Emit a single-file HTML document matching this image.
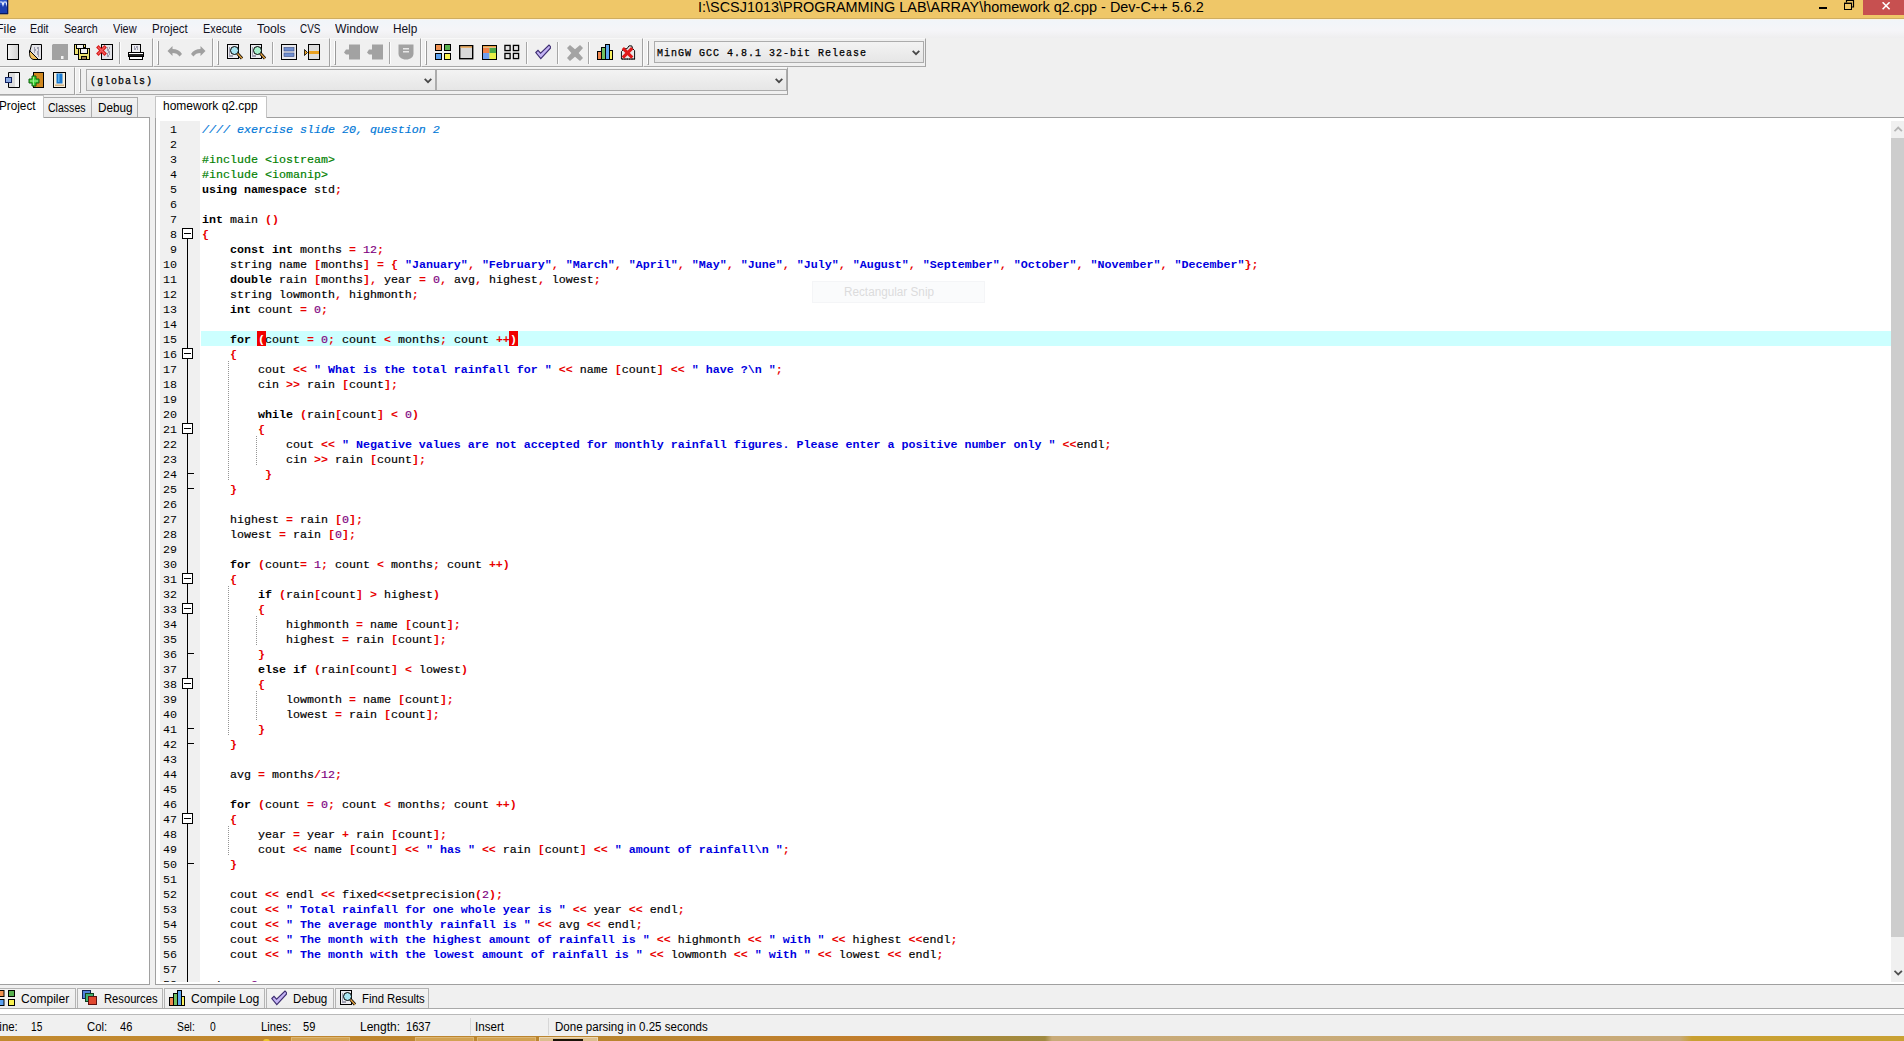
<!DOCTYPE html>
<html lang="en">
<head>
<meta charset="utf-8">
<title>Dev-C++ 5.6.2</title>
<style>
html,body{margin:0;padding:0}
body{width:1904px;height:1041px;position:relative;overflow:hidden;background:#f0f0f0;
 font-family:"Liberation Sans",sans-serif;font-size:12px;color:#000}
div,span,svg,b,i{box-sizing:border-box}
.a{position:absolute}
/* ---- title bar ---- */
#title{position:absolute;left:0;top:0;width:1904px;height:19px;background:#efc768;border-bottom:1px solid #cfad60}
#ttext{position:absolute;transform-origin:0 0;left:698px;top:-3px;height:20px;line-height:20px;font-size:15px;white-space:pre;color:#000}
#close{position:absolute;left:1863px;top:0;width:41px;height:15px;background:#c75050}
/* ---- menu ---- */
#menu{position:absolute;left:0;top:19px;width:1904px;height:19px;border-top:1px solid #fcf5e6;background:linear-gradient(#f1f5f9,#f5f5f8 60%,#eeeeef)}
.t{position:absolute;transform-origin:0 0;white-space:pre;line-height:14px;height:14px;color:#000}
#menu .t{top:2px;color:#10101c}
/* ---- toolbars ---- */
.band{position:absolute;border-right:1px solid #a3a3a3;border-bottom:1px solid #a9a9a9;border-left:1px solid #fbfbfb;border-top:1px solid #f8f8f8;background:#f0f0f0}
.grip{position:absolute;left:3px;top:2px;width:2px;height:24px;border-left:1px solid #fff;border-right:1px solid #9a9a9a;border-bottom:1px solid #9a9a9a}
.sep{position:absolute;width:2px;height:22px;border-left:1px solid #a6a6a6;border-right:1px solid #fdfdfd}
.ic{position:absolute;width:16px;height:16px;overflow:visible}
.combo{position:absolute;height:22px;border:1px solid #acacac;background:linear-gradient(#f3f3f3,#e6e6e6);
 font-family:"Liberation Mono",monospace;font-size:10px;letter-spacing:1px;-webkit-text-stroke:0.25px;line-height:23px;padding-left:3px;white-space:pre;color:#000}
.combo svg{position:absolute;right:3px;top:8px}
/* ---- left panel ---- */
#lpane{position:absolute;left:-1px;top:117px;width:151px;height:868px;background:#fff;border:1px solid #a0a0a0}
.ltab{position:absolute;top:97px;height:20px;border:1px solid #acacac;border-bottom:none;background:linear-gradient(#f2f2f2,#ebebeb)}
/* ---- editor ---- */
#ed{position:absolute;left:155px;top:117px;width:1760px;height:868px;background:#fff;border:1px solid #a0a0a0}
#etab{position:absolute;left:155px;top:96px;width:112px;height:22px;background:#fff;border:1px solid #c4c4c4;border-bottom:none}
#gut{position:absolute;left:160px;top:121px;width:40px;height:863px;background:#f0f0f0}
#hlrow{position:absolute;left:201px;top:331px;width:1690px;height:15px;background:#ccffff}
.l,.g{position:absolute;height:15px;line-height:15px;margin-top:2px;font-family:"Liberation Mono",monospace;font-size:11.6667px;white-space:pre;color:#000}
.l{left:202px;-webkit-text-stroke:0.18px}
.g{left:150px;width:27px;text-align:right}
.l b{font-weight:bold;-webkit-text-stroke:0}
.l i{font-style:normal}
.l .c{font-style:italic;color:#0078d7}
.l .p{color:#008000}
.l .s{color:#0000e0}
.l .n{color:#800080}
.l .y{color:#e80000}
.l .m{color:#fff}
.mb{position:absolute;top:331px;width:9px;height:15px;background:#f00000}
.fv{position:absolute;left:187px;width:1px;background:#000}
.fb{position:absolute;left:182px;width:11px;height:11px;border:1px solid #000;background:#fff}
.fb span{position:absolute;left:1px;top:4px;width:7px;height:1px;background:#000}
.ft{position:absolute;left:188px;width:6px;height:1px;background:#000}
.ig{position:absolute;width:1px;background:repeating-linear-gradient(#959595 0,#959595 1px,transparent 1px,transparent 2px)}
#clip{position:absolute;left:156px;top:118px;width:1748px;height:864px;overflow:hidden}
#clipin{position:absolute;left:-156px;top:-118px;width:1904px;height:1041px}
/* scrollbar */
#sb{position:absolute;left:1891px;top:121px;width:13px;height:861px;background:#f0f0f0}
#sbthumb{position:absolute;left:0;top:17px;width:13px;height:799px;background:#cdcdcd}
/* ---- bottom ---- */
.btab{position:absolute;top:988px;height:21px;border:1px solid #b4b4b4;border-bottom:none;background:linear-gradient(#f3f3f3,#ececec)}
#bwhite{position:absolute;left:0;top:1008px;width:1904px;height:6px;background:#fff;border-top:1px solid #a9a9a9}
#status{position:absolute;left:0;top:1014px;width:1904px;height:22px;background:#f0f0f0;border-top:1px solid #b9b9b9}
#status .t{top:5px}
.ssep{position:absolute;top:3px;width:1px;height:17px;background:#d7d7d7}
#taskbar{position:absolute;left:0;top:1036px;width:1904px;height:5px;
 background:linear-gradient(90deg,#c28a2f 0,#c0862e 300px,#b9842e 640px,#c37d2c 900px,#a98838 960px,#a08a40 1045px,#c9ab78 1052px,#c8aa78 1680px,#c9a032 1692px,#c9a133 1904px)}
.tk{position:absolute;top:1px;width:59px;height:5px;background:#d2a252;border:1px solid #dcb673;border-bottom:none}
</style>
</head>
<body>

<!-- ================= TITLE BAR ================= -->
<div id="title">
 <svg class="a" style="left:0;top:0" width="9" height="15" viewBox="0 0 9 15"><rect x="0" y="0" width="8" height="14" fill="#1c3fb0"/><rect x="0" y="0" width="8" height="5" fill="#2c55c8"/><path d="M0 2h2l1 3 1-3h2l1 3 1-3" stroke="#e8eefc" stroke-width="1.2" fill="none"/><rect x="7" y="0" width="1.3" height="14" fill="#0a1a60"/><rect x="0" y="13" width="8" height="1.3" fill="#0a1a60"/></svg>
 <div id="ttext" style="transform:scaleX(0.962)">I:\SCSJ1013\PROGRAMMING LAB\ARRAY\homework q2.cpp - Dev-C++ 5.6.2</div>
 <svg class="a" style="left:1815px;top:0" width="48" height="15" viewBox="0 0 48 15">
  <rect x="4" y="7" width="8" height="2" fill="#000"/>
  <rect x="29.500" y="3.500" width="7" height="6" fill="none" stroke="#000" stroke-width="1"/>
  <rect x="29" y="2.600" width="8" height="1.400" fill="#000"/>
  <path d="M31.500 2.600V0.500h7v6.500h-1.500" fill="none" stroke="#000" stroke-width="1.200"/>
 </svg>
 <div id="close"><svg class="a" style="left:19px;top:2px" width="9" height="8" viewBox="0 0 9 8"><path d="M0.600 0.300l7 7M7.600 0.300l-7 7" stroke="#fff" stroke-width="1.600" fill="none"/></svg></div>
</div>

<!-- ================= MENU BAR ================= -->
<div id="menu">
 <span class="t" style="left:-4px;transform:scaleX(1.040)">File</span>
 <span class="t" style="left:30px;transform:scaleX(0.895)">Edit</span>
 <span class="t" style="left:64px;transform:scaleX(0.889)">Search</span>
 <span class="t" style="left:113px;transform:scaleX(0.915)">View</span>
 <span class="t" style="left:152px;transform:scaleX(0.958)">Project</span>
 <span class="t" style="left:203px;transform:scaleX(0.902)">Execute</span>
 <span class="t" style="left:257px;transform:scaleX(1.022)">Tools</span>
 <span class="t" style="left:300px;transform:scaleX(0.824)">CVS</span>
 <span class="t" style="left:335px;transform:scaleX(1.014)">Window</span>
 <span class="t" style="left:393px;transform:scaleX(0.984)">Help</span>
</div>

<!-- ================= TOOLBARS ================= -->
<!-- row 1 : main toolbar -->
<div class="band" style="left:-1px;top:38px;width:154px;height:29px">
 <!-- new -->
 <svg class="ic" style="left:7px;top:5px" viewBox="0 0 16 16"><defs><linearGradient id="gp" x1="0" x2="1"><stop offset="0" stop-color="#f4f4f4"/><stop offset="1" stop-color="#d2d2d2"/></linearGradient></defs><rect x="0.500" y="0.500" width="11" height="15" fill="url(#gp)" stroke="#000"/></svg>
 <!-- open -->
 <svg class="ic" style="left:28px;top:5px" viewBox="0 0 16 16"><path d="M3.500 0.500h10v15h-6l-6-7z" fill="#e4e4e8" stroke="#000"/><path d="M6 4h1M9 4h2M6 6h2M10 6h1M6 8h1M9 8h2M9 10h2M10 12h1" stroke="#5a5a78" stroke-width="1"/><path d="M1.500 6.500l9 9h-4.500c-3 0-4.500-3-4.500-6z" fill="#f0c060" stroke="#000"/></svg>
 <!-- save (disabled) -->
 <svg class="ic" style="left:52px;top:5px" viewBox="0 0 16 16"><rect x="0" y="0" width="16" height="16" fill="#a2a2a2"/><rect x="9" y="12" width="2.500" height="3" fill="#f4f4f4"/><rect x="0" y="0" width="1" height="1" fill="#d0d0d0"/></svg>
 <!-- save all -->
 <svg class="ic" style="left:74px;top:5px" viewBox="0 0 16 16"><rect x="0.500" y="0.500" width="11" height="10" fill="#ece070" stroke="#000"/><rect x="2.500" y="0.500" width="7" height="4" fill="#f2f2f2" stroke="#000"/><rect x="4.500" y="4.500" width="11" height="11" fill="#ece070" stroke="#000"/><rect x="6.500" y="4.500" width="7" height="5" fill="#f0f0f4" stroke="#000"/><rect x="7.500" y="12.500" width="5" height="3" fill="#a08050" stroke="#000"/><rect x="9" y="3" width="3" height="2" fill="#000"/></svg>
 <!-- close -->
 <svg class="ic" style="left:97px;top:5px" viewBox="0 0 16 16"><rect x="4.500" y="0.500" width="11" height="15" fill="#e2e2e6" stroke="#000"/><path d="M10 4h1M12 4h1M10 6h2M11 8h2M10 10h1M12 10h1M10 12h2" stroke="#5a5a78"/><path d="M1.500 3.500l6 6M7.500 3.500l-6 6" stroke="#d81818" stroke-width="3.400" stroke-linecap="square"/><path d="M1.500 3.500l6 6M7.500 3.500l-6 6" stroke="#f26060" stroke-width="1.300" stroke-linecap="square"/></svg>
 <div class="sep" style="left:119px;top:3px"></div>
 <!-- print -->
 <svg class="ic" style="left:128px;top:5px" viewBox="0 0 16 16"><rect x="3.500" y="0.500" width="9" height="8" fill="#ececf0" stroke="#000"/><path d="M6 3h1M8 3h2M6 5h2M9 5h1" stroke="#5a5a78"/><rect x="0.500" y="8.500" width="15" height="4" fill="#fff" stroke="#000"/><rect x="1.500" y="12.500" width="13" height="3" fill="#fff" stroke="#000"/><rect x="1" y="10" width="14" height="2" fill="#202020"/></svg>
</div>
<!-- undo / redo -->
<div class="band" style="left:153px;top:38px;width:60px;height:29px"><div class="grip"></div>
 <svg class="ic" style="left:13px;top:5px" viewBox="0 0 16 16"><path d="M0.500 7l5-5v3c4 0 7.500 1.500 9.500 5l-2.500 2.500c-1.500-2.500-4-3.500-7-3.500v3z" fill="#a0a0a0"/></svg>
 <svg class="ic" style="left:36px;top:5px" viewBox="0 0 16 16"><path d="M15.500 7l-5-5v3c-4 0-7.500 1.500-9.500 5l2.500 2.500c1.500-2.500 4-3.500 7-3.500v3z" fill="#a0a0a0"/></svg>
</div>
<!-- search -->
<div class="band" style="left:213px;top:38px;width:117px;height:29px"><div class="grip"></div>
 <svg class="ic" style="left:13px;top:5px" viewBox="0 0 16 16"><rect x="0.500" y="0.500" width="11" height="14" fill="#ececf0" stroke="#000"/><path d="M2 4h1M2 6h1M2 8h1M2 10h1M2 12h4" stroke="#5a5a78"/><circle cx="7.500" cy="6.500" r="4" fill="#a8e4f0" stroke="#000"/><path d="M10.500 9.500l4.500 5" stroke="#000" stroke-width="3"/><path d="M10.500 9.500l4.500 5" stroke="#e0a040" stroke-width="1.400"/></svg>
 <svg class="ic" style="left:36px;top:5px" viewBox="0 0 16 16"><rect x="0.500" y="0.500" width="11" height="14" fill="#ececf0" stroke="#000"/><path d="M2 4h1M2 6h1M2 8h1M2 10h1M2 12h4" stroke="#5a5a78"/><circle cx="7.500" cy="6.500" r="4" fill="#a8f0cc" stroke="#000"/><path d="M10.500 9.500l4.500 5" stroke="#000" stroke-width="3"/><path d="M10.500 9.500l4.500 5" stroke="#e0a040" stroke-width="1.400"/></svg>
 <div class="sep" style="left:58px;top:3px"></div>
 <svg class="ic" style="left:67px;top:5px" viewBox="0 0 16 16"><rect x="0.500" y="0.500" width="15" height="15" fill="#e8e8ec" stroke="#000"/><rect x="3" y="3.500" width="10" height="3.500" fill="#6f8fd0" stroke="#3a4a80" stroke-width=".6"/><rect x="3" y="9" width="10" height="3.500" fill="#6f8fd0" stroke="#3a4a80" stroke-width=".6"/></svg>
 <svg class="ic" style="left:90px;top:5px" viewBox="0 0 16 16"><rect x="4.500" y="0.500" width="11" height="15" fill="#dcdcdc" stroke="#000"/><rect x="5" y="7" width="10" height="3" fill="#e8a020"/><path d="M0.500 5.500l3 3-3 3z" fill="#e8a020" stroke="#000" stroke-width=".8"/></svg>
</div>
<!-- disabled group -->
<div class="band" style="left:330px;top:38px;width:91px;height:29px"><div class="grip"></div>
 <svg class="ic" style="left:13px;top:5px" viewBox="0 0 16 16"><path d="M5 0.500h11v15h-11v-5h-3l-2-2 2-3h3z" fill="#a2a2a2"/></svg>
 <svg class="ic" style="left:36px;top:5px" viewBox="0 0 16 16"><path d="M5 0.500h11v15h-11v-5h-3l-2-2 2-3h3z" fill="#a2a2a2"/></svg>
 <div class="sep" style="left:58px;top:3px"></div>
 <svg class="ic" style="left:67px;top:5px" viewBox="0 0 16 16"><path d="M0.500 0.500h15v9c0 3.500-3 6-7.500 6s-7.500-2.500-7.500-6z" fill="#a2a2a2"/><rect x="5" y="4" width="6" height="1.500" fill="#e8e8e8"/><rect x="5" y="7" width="6" height="1.500" fill="#e8e8e8"/></svg>
</div>
<!-- compile / run -->
<div class="band" style="left:421px;top:38px;width:222px;height:29px"><div class="grip"></div>
 <svg class="ic" style="left:13px;top:5px" viewBox="0 0 16 16"><rect x="0.500" y="0.500" width="6" height="6" fill="#f09050" stroke="#000"/><rect x="9.500" y="0.500" width="6" height="6" fill="#58b050" stroke="#000"/><rect x="0.500" y="9.500" width="6" height="6" fill="#5aa0f0" stroke="#000"/><rect x="9.500" y="9.500" width="6" height="6" fill="#f8f050" stroke="#000"/></svg>
 <svg class="ic" style="left:37px;top:6px" viewBox="0 0 16 16"><rect x="0.700" y="0.700" width="13" height="13" fill="#d8d8d8" stroke="#000" stroke-width="1.400"/><rect x="1.400" y="1.400" width="11.600" height="1.300" fill="#f0a040"/></svg>
 <svg class="ic" style="left:60px;top:6px" viewBox="0 0 16 16"><rect x="0.500" y="0.500" width="14" height="14" fill="#d8d8d8" stroke="#000"/><rect x="1" y="3" width="6.500" height="5" fill="#f08048"/><rect x="7.500" y="3" width="6.500" height="5" fill="#48a848"/><rect x="1" y="8" width="6.500" height="6" fill="#70a0f0"/><rect x="7.500" y="8" width="6.500" height="6" fill="#e8f048"/><rect x="1" y="1" width="13" height="1.500" fill="#f0a040"/></svg>
 <svg class="ic" style="left:82px;top:5px" viewBox="0 0 17 16"><rect x="1" y="1" width="5.500" height="5.500" fill="#e4e4e4" stroke="#000" stroke-width="1.400"/><rect x="10" y="1" width="5.500" height="5.500" fill="#e4e4e4" stroke="#000" stroke-width="1.400"/><rect x="1" y="9.500" width="5.500" height="5.500" fill="#e4e4e4" stroke="#000" stroke-width="1.400"/><rect x="10" y="9.500" width="5.500" height="5.500" fill="#e4e4e4" stroke="#000" stroke-width="1.400"/></svg>
 <div class="sep" style="left:104px;top:3px"></div>
 <svg class="ic" style="left:113px;top:5px" viewBox="0 0 16 16"><path d="M0.800 8.500l2.200-2.200 2.600 2.900 8.400-8.200 1.400 1.400v1.800l-9.600 10.400z" fill="#c4b4f4" stroke="#3c2c70" stroke-width="1.100"/></svg>
 <div class="sep" style="left:135px;top:3px"></div>
 <svg class="ic" style="left:145px;top:6px" viewBox="0 0 14 14"><path d="M2.600 0l4.400 3.800 4.400-3.800 2.600 2.600-3.800 4.400 3.800 4.400-2.600 2.600-4.400-3.800-4.400 3.800-2.600-2.600 3.800-4.400-3.800-4.400z" fill="#a4a4a4"/></svg>
 <div class="sep" style="left:166px;top:3px"></div>
 <svg class="ic" style="left:175px;top:5px" viewBox="0 0 16 16"><rect x="0.500" y="7.500" width="4" height="8" fill="#f08850" stroke="#000"/><rect x="4.500" y="3.500" width="4" height="12" fill="#70c060" stroke="#000"/><rect x="8.500" y="0.500" width="4" height="15" fill="#60a8f0" stroke="#000"/><rect x="12.500" y="6.500" width="3" height="9" fill="#f8f060" stroke="#000"/></svg>
 <svg class="ic" style="left:198px;top:5px" viewBox="0 0 17 16"><path d="M1.500 15.500v-8l3-3h3l2-3h3l1 3 2 2v9z" fill="#e8e8e8" stroke="#000"/><path d="M2 15.500h14" stroke="#000" stroke-dasharray="1.500 1"/><path d="M3 4l10 10M13 4l-10 10" stroke="#e01818" stroke-width="3.400"/></svg>
</div>
<!-- compiler set combo -->
<div class="band" style="left:643px;top:38px;width:283px;height:29px"><div class="grip"></div>
 <div class="combo" style="left:10px;top:2px;width:270px;padding-left:2px">MinGW GCC 4.8.1 32-bit Release<svg width="8" height="6" viewBox="0 0 8 6"><path d="M0.700 0.900l3.300 3.300 3.300-3.300" fill="none" stroke="#484848" stroke-width="1.800"/></svg></div>
</div>
<!-- row 2 -->
<div class="band" style="left:-1px;top:67px;width:76px;height:28px">
 <svg class="ic" style="left:5px;top:4px" viewBox="0 0 16 16"><path d="M3.500 5v-4.500h11v15h-11v-4.500" fill="#dcdcdc" stroke="#000"/><rect x="10" y="1" width="4" height="14" fill="#f4f4f4"/><rect x="0.500" y="5.500" width="6" height="5" fill="#88a8e0" stroke="#102060"/></svg>
 <svg class="ic" style="left:28px;top:4px" viewBox="0 0 16 16"><rect x="5.500" y="0.500" width="10" height="15" fill="#d08820" stroke="#000"/><path d="M4 4h4v3h3v4h-3v3h-4v-3h-3v-4h3z" fill="#38d030" stroke="#106010" stroke-width="1"/><path d="M5.500 5v8M2 9h8" stroke="#a0f090" stroke-width="1"/></svg>
 <svg class="ic" style="left:53px;top:4px" viewBox="0 0 16 16"><rect x="0.500" y="0.500" width="12" height="15" fill="#f6eedc" stroke="#000" stroke-width="1"/><rect x="3.500" y="1.500" width="6" height="10" fill="#1878d0"/><rect x="5" y="2" width="1.500" height="8" fill="#58b0f0"/><rect x="2" y="12.500" width="9" height="1.500" fill="#d0b080"/></svg>
</div>
<div class="band" style="left:75px;top:67px;width:713px;height:28px"><div class="grip" style="top:1px"></div>
 <div class="combo" style="left:10px;top:1px;width:350px">(globals)<svg width="8" height="6" viewBox="0 0 8 6"><path d="M0.700 0.900l3.300 3.300 3.300-3.300" fill="none" stroke="#484848" stroke-width="1.800"/></svg></div>
 <div class="combo" style="left:360px;top:1px;width:351px"><svg width="8" height="6" viewBox="0 0 8 6"><path d="M0.700 0.900l3.300 3.300 3.300-3.300" fill="none" stroke="#484848" stroke-width="1.800"/></svg></div>
</div>


<!-- ================= LEFT PANEL ================= -->
<div id="lpane"></div>
<div class="ltab" style="left:43px;width:49px"></div>
<div class="ltab" style="left:91px;width:47px"></div>
<div class="a" style="left:-1px;top:95px;width:45px;height:23px;background:#fff;border:1px solid #c4c4c4;border-bottom:none"></div>
<span class="t" style="left:-1px;top:99px;transform:scaleX(0.978)">Project</span>
<span class="t" style="left:48px;top:101px;transform:scaleX(0.879)">Classes</span>
<span class="t" style="left:98px;top:101px;transform:scaleX(0.977)">Debug</span>

<!-- ================= EDITOR ================= -->
<div id="ed"></div>
<div id="etab"></div>
<span class="t" style="left:163px;top:99px;transform:scaleX(1.000)">homework q2.cpp</span>
<div id="clip"><div id="clipin">
<div id="gut"></div>
<div id="hlrow"></div>
<div class="mb" style="left:257px"></div><div class="mb" style="left:509px"></div>
<div class="fv" style="top:239px;height:745px"></div>
<div class="fb" style="top:228px"><span></span></div>
<div class="fb" style="top:348px"><span></span></div>
<div class="fb" style="top:423px"><span></span></div>
<div class="fb" style="top:573px"><span></span></div>
<div class="fb" style="top:603px"><span></span></div>
<div class="fb" style="top:678px"><span></span></div>
<div class="fb" style="top:813px"><span></span></div>
<div class="ft" style="top:473px"></div>
<div class="ft" style="top:488px"></div>
<div class="ft" style="top:653px"></div>
<div class="ft" style="top:728px"></div>
<div class="ft" style="top:743px"></div>
<div class="ft" style="top:863px"></div>
<div class="ig" style="left:228px;top:361px;height:120px"></div>
<div class="ig" style="left:228px;top:586px;height:150px"></div>
<div class="ig" style="left:228px;top:826px;height:30px"></div>
<div class="ig" style="left:256px;top:436px;height:30px"></div>
<div class="ig" style="left:256px;top:616px;height:30px"></div>
<div class="ig" style="left:256px;top:691px;height:30px"></div>
<div class="g" style="top:121px">1</div>
<div class="g" style="top:136px">2</div>
<div class="g" style="top:151px">3</div>
<div class="g" style="top:166px">4</div>
<div class="g" style="top:181px">5</div>
<div class="g" style="top:196px">6</div>
<div class="g" style="top:211px">7</div>
<div class="g" style="top:226px">8</div>
<div class="g" style="top:241px">9</div>
<div class="g" style="top:256px">10</div>
<div class="g" style="top:271px">11</div>
<div class="g" style="top:286px">12</div>
<div class="g" style="top:301px">13</div>
<div class="g" style="top:316px">14</div>
<div class="g" style="top:331px">15</div>
<div class="g" style="top:346px">16</div>
<div class="g" style="top:361px">17</div>
<div class="g" style="top:376px">18</div>
<div class="g" style="top:391px">19</div>
<div class="g" style="top:406px">20</div>
<div class="g" style="top:421px">21</div>
<div class="g" style="top:436px">22</div>
<div class="g" style="top:451px">23</div>
<div class="g" style="top:466px">24</div>
<div class="g" style="top:481px">25</div>
<div class="g" style="top:496px">26</div>
<div class="g" style="top:511px">27</div>
<div class="g" style="top:526px">28</div>
<div class="g" style="top:541px">29</div>
<div class="g" style="top:556px">30</div>
<div class="g" style="top:571px">31</div>
<div class="g" style="top:586px">32</div>
<div class="g" style="top:601px">33</div>
<div class="g" style="top:616px">34</div>
<div class="g" style="top:631px">35</div>
<div class="g" style="top:646px">36</div>
<div class="g" style="top:661px">37</div>
<div class="g" style="top:676px">38</div>
<div class="g" style="top:691px">39</div>
<div class="g" style="top:706px">40</div>
<div class="g" style="top:721px">41</div>
<div class="g" style="top:736px">42</div>
<div class="g" style="top:751px">43</div>
<div class="g" style="top:766px">44</div>
<div class="g" style="top:781px">45</div>
<div class="g" style="top:796px">46</div>
<div class="g" style="top:811px">47</div>
<div class="g" style="top:826px">48</div>
<div class="g" style="top:841px">49</div>
<div class="g" style="top:856px">50</div>
<div class="g" style="top:871px">51</div>
<div class="g" style="top:886px">52</div>
<div class="g" style="top:901px">53</div>
<div class="g" style="top:916px">54</div>
<div class="g" style="top:931px">55</div>
<div class="g" style="top:946px">56</div>
<div class="g" style="top:961px">57</div>
<div class="g" style="top:976px">58</div>
<div class="l" style="top:121px"><i class="c">//// exercise slide 20, question 2</i></div>
<div class="l" style="top:136px"></div>
<div class="l" style="top:151px"><i class="p">#include &lt;iostream&gt;</i></div>
<div class="l" style="top:166px"><i class="p">#include &lt;iomanip&gt;</i></div>
<div class="l" style="top:181px"><b>using</b> <b>namespace</b> std<b class="y">;</b></div>
<div class="l" style="top:196px"></div>
<div class="l" style="top:211px"><b>int</b> main <b class="y">()</b></div>
<div class="l" style="top:226px"><b class="y">{</b></div>
<div class="l" style="top:241px">    <b>const</b> <b>int</b> months <b class="y">=</b> <i class="n">12</i><b class="y">;</b></div>
<div class="l" style="top:256px">    string name <b class="y">[</b>months<b class="y">]</b> <b class="y">=</b> <b class="y">{</b> <b class="s">&quot;January&quot;</b><b class="y">,</b> <b class="s">&quot;February&quot;</b><b class="y">,</b> <b class="s">&quot;March&quot;</b><b class="y">,</b> <b class="s">&quot;April&quot;</b><b class="y">,</b> <b class="s">&quot;May&quot;</b><b class="y">,</b> <b class="s">&quot;June&quot;</b><b class="y">,</b> <b class="s">&quot;July&quot;</b><b class="y">,</b> <b class="s">&quot;August&quot;</b><b class="y">,</b> <b class="s">&quot;September&quot;</b><b class="y">,</b> <b class="s">&quot;October&quot;</b><b class="y">,</b> <b class="s">&quot;November&quot;</b><b class="y">,</b> <b class="s">&quot;December&quot;</b><b class="y">};</b></div>
<div class="l" style="top:271px">    <b>double</b> rain <b class="y">[</b>months<b class="y">],</b> year <b class="y">=</b> <i class="n">0</i><b class="y">,</b> avg<b class="y">,</b> highest<b class="y">,</b> lowest<b class="y">;</b></div>
<div class="l" style="top:286px">    string lowmonth<b class="y">,</b> highmonth<b class="y">;</b></div>
<div class="l" style="top:301px">    <b>int</b> count <b class="y">=</b> <i class="n">0</i><b class="y">;</b></div>
<div class="l" style="top:316px"></div>
<div class="l" style="top:331px">    <b>for</b> <b class="m">(</b>count <b class="y">=</b> <i class="n">0</i><b class="y">;</b> count <b class="y">&lt;</b> months<b class="y">;</b> count <b class="y">++</b><b class="m">)</b></div>
<div class="l" style="top:346px">    <b class="y">{</b></div>
<div class="l" style="top:361px">        cout <b class="y">&lt;&lt;</b> <b class="s">&quot; What is the total rainfall for &quot;</b> <b class="y">&lt;&lt;</b> name <b class="y">[</b>count<b class="y">]</b> <b class="y">&lt;&lt;</b> <b class="s">&quot; have ?\n &quot;</b><b class="y">;</b></div>
<div class="l" style="top:376px">        cin <b class="y">&gt;&gt;</b> rain <b class="y">[</b>count<b class="y">];</b></div>
<div class="l" style="top:391px"></div>
<div class="l" style="top:406px">        <b>while</b> <b class="y">(</b>rain<b class="y">[</b>count<b class="y">]</b> <b class="y">&lt;</b> <i class="n">0</i><b class="y">)</b></div>
<div class="l" style="top:421px">        <b class="y">{</b></div>
<div class="l" style="top:436px">            cout <b class="y">&lt;&lt;</b> <b class="s">&quot; Negative values are not accepted for monthly rainfall figures. Please enter a positive number only &quot;</b> <b class="y">&lt;&lt;</b>endl<b class="y">;</b></div>
<div class="l" style="top:451px">            cin <b class="y">&gt;&gt;</b> rain <b class="y">[</b>count<b class="y">];</b></div>
<div class="l" style="top:466px">         <b class="y">}</b></div>
<div class="l" style="top:481px">    <b class="y">}</b></div>
<div class="l" style="top:496px"></div>
<div class="l" style="top:511px">    highest <b class="y">=</b> rain <b class="y">[</b><i class="n">0</i><b class="y">];</b></div>
<div class="l" style="top:526px">    lowest <b class="y">=</b> rain <b class="y">[</b><i class="n">0</i><b class="y">];</b></div>
<div class="l" style="top:541px"></div>
<div class="l" style="top:556px">    <b>for</b> <b class="y">(</b>count<b class="y">=</b> <i class="n">1</i><b class="y">;</b> count <b class="y">&lt;</b> months<b class="y">;</b> count <b class="y">++)</b></div>
<div class="l" style="top:571px">    <b class="y">{</b></div>
<div class="l" style="top:586px">        <b>if</b> <b class="y">(</b>rain<b class="y">[</b>count<b class="y">]</b> <b class="y">&gt;</b> highest<b class="y">)</b></div>
<div class="l" style="top:601px">        <b class="y">{</b></div>
<div class="l" style="top:616px">            highmonth <b class="y">=</b> name <b class="y">[</b>count<b class="y">];</b></div>
<div class="l" style="top:631px">            highest <b class="y">=</b> rain <b class="y">[</b>count<b class="y">];</b></div>
<div class="l" style="top:646px">        <b class="y">}</b></div>
<div class="l" style="top:661px">        <b>else</b> <b>if</b> <b class="y">(</b>rain<b class="y">[</b>count<b class="y">]</b> <b class="y">&lt;</b> lowest<b class="y">)</b></div>
<div class="l" style="top:676px">        <b class="y">{</b></div>
<div class="l" style="top:691px">            lowmonth <b class="y">=</b> name <b class="y">[</b>count<b class="y">];</b></div>
<div class="l" style="top:706px">            lowest <b class="y">=</b> rain <b class="y">[</b>count<b class="y">];</b></div>
<div class="l" style="top:721px">        <b class="y">}</b></div>
<div class="l" style="top:736px">    <b class="y">}</b></div>
<div class="l" style="top:751px"></div>
<div class="l" style="top:766px">    avg <b class="y">=</b> months<b class="y">/</b><i class="n">12</i><b class="y">;</b></div>
<div class="l" style="top:781px"></div>
<div class="l" style="top:796px">    <b>for</b> <b class="y">(</b>count <b class="y">=</b> <i class="n">0</i><b class="y">;</b> count <b class="y">&lt;</b> months<b class="y">;</b> count <b class="y">++)</b></div>
<div class="l" style="top:811px">    <b class="y">{</b></div>
<div class="l" style="top:826px">        year <b class="y">=</b> year <b class="y">+</b> rain <b class="y">[</b>count<b class="y">];</b></div>
<div class="l" style="top:841px">        cout <b class="y">&lt;&lt;</b> name <b class="y">[</b>count<b class="y">]</b> <b class="y">&lt;&lt;</b> <b class="s">&quot; has &quot;</b> <b class="y">&lt;&lt;</b> rain <b class="y">[</b>count<b class="y">]</b> <b class="y">&lt;&lt;</b> <b class="s">&quot; amount of rainfall\n &quot;</b><b class="y">;</b></div>
<div class="l" style="top:856px">    <b class="y">}</b></div>
<div class="l" style="top:871px"></div>
<div class="l" style="top:886px">    cout <b class="y">&lt;&lt;</b> endl <b class="y">&lt;&lt;</b> fixed<b class="y">&lt;&lt;</b>setprecision<b class="y">(</b><i class="n">2</i><b class="y">);</b></div>
<div class="l" style="top:901px">    cout <b class="y">&lt;&lt;</b> <b class="s">&quot; Total rainfall for one whole year is &quot;</b> <b class="y">&lt;&lt;</b> year <b class="y">&lt;&lt;</b> endl<b class="y">;</b></div>
<div class="l" style="top:916px">    cout <b class="y">&lt;&lt;</b> <b class="s">&quot; The average monthly rainfall is &quot;</b> <b class="y">&lt;&lt;</b> avg <b class="y">&lt;&lt;</b> endl<b class="y">;</b></div>
<div class="l" style="top:931px">    cout <b class="y">&lt;&lt;</b> <b class="s">&quot; The month with the highest amount of rainfall is &quot;</b> <b class="y">&lt;&lt;</b> highmonth <b class="y">&lt;&lt;</b> <b class="s">&quot; with &quot;</b> <b class="y">&lt;&lt;</b> highest <b class="y">&lt;&lt;</b>endl<b class="y">;</b></div>
<div class="l" style="top:946px">    cout <b class="y">&lt;&lt;</b> <b class="s">&quot; The month with the lowest amount of rainfall is &quot;</b> <b class="y">&lt;&lt;</b> lowmonth <b class="y">&lt;&lt;</b> <b class="s">&quot; with &quot;</b> <b class="y">&lt;&lt;</b> lowest <b class="y">&lt;&lt;</b> endl<b class="y">;</b></div>
<div class="l" style="top:961px"></div>
<div class="l" style="top:976px"><b>return</b> <i class="n">0</i><b class="y">;</b></div>
<div class="a" style="left:812px;top:281px;width:173px;height:22px;background:#fafbfc;border:1px solid #f4f5f7"></div>
<span class="t" style="left:844px;top:285px;color:#dcdcdc;transform:scaleX(0.978)">Rectangular Snip</span>
<div id="sb">
 <svg class="a" style="left:3px;top:5px" width="9" height="6" viewBox="0 0 9 6"><path d="M0.500 5.200L4.200 1.500 7.900 5.200" fill="none" stroke="#b4b4b4" stroke-width="1.800"/></svg>
 <div id="sbthumb"></div>
 <svg class="a" style="left:3px;top:849px" width="9" height="6" viewBox="0 0 9 6"><path d="M0.500 0.800L4.200 4.500 7.900 0.800" fill="none" stroke="#505050" stroke-width="1.800"/></svg>
</div>
</div></div>

<!-- ================= BOTTOM TABS ================= -->
<div class="btab" style="left:-1px;width:77px"></div>
<div class="btab" style="left:77px;width:86px"></div>
<div class="btab" style="left:164px;width:101px"></div>
<div class="btab" style="left:266px;width:68px"></div>
<div class="btab" style="left:335px;width:94px"></div>
<svg class="ic" style="left:-1px;top:990px" viewBox="0 0 16 16"><rect x="-1" y="0.500" width="6" height="6" fill="#f09050" stroke="#000"/><rect x="9.500" y="0.500" width="6" height="6" fill="#58b050" stroke="#000"/><rect x="-1" y="9.500" width="6" height="6" fill="#5aa0f0" stroke="#000"/><rect x="9.500" y="9.500" width="6" height="6" fill="#f8f050" stroke="#000"/></svg>
<svg class="ic" style="left:82px;top:990px" viewBox="0 0 16 16"><rect x="0.500" y="0.500" width="8" height="8" fill="#5080d8" stroke="#102050"/><rect x="3.500" y="3.500" width="8" height="8" fill="#40b070" stroke="#104020"/><rect x="6.500" y="6.500" width="8" height="8" fill="#e04830" stroke="#601010"/></svg>
<svg class="ic" style="left:169px;top:990px" viewBox="0 0 16 16"><rect x="0.500" y="7.500" width="4" height="8" fill="#f08850" stroke="#000"/><rect x="4.500" y="3.500" width="4" height="12" fill="#70c060" stroke="#000"/><rect x="8.500" y="0.500" width="4" height="15" fill="#60a8f0" stroke="#000"/><rect x="12.500" y="6.500" width="3" height="9" fill="#f8f060" stroke="#000"/></svg>
<svg class="ic" style="left:271px;top:990px" viewBox="0 0 16 16"><path d="M0.800 8.500l2.200-2.200 2.600 2.900 8.400-8.200 1.400 1.400v1.800l-9.600 10.400z" fill="#c4b4f4" stroke="#3c2c70" stroke-width="1.100"/></svg>
<svg class="ic" style="left:340px;top:990px" viewBox="0 0 16 16"><rect x="0.500" y="0.500" width="11" height="14" fill="#ececf0" stroke="#000"/><path d="M2 4h1M2 6h1M2 8h1M2 10h1M2 12h4" stroke="#5a5a78"/><circle cx="7.500" cy="6.500" r="4" fill="#a8e4f0" stroke="#000"/><path d="M10.500 9.500l4.500 5" stroke="#000" stroke-width="3"/><path d="M10.500 9.500l4.500 5" stroke="#e0a040" stroke-width="1.400"/></svg>
<span class="t" style="left:21px;top:992px;transform:scaleX(1.004)">Compiler</span>
<span class="t" style="left:104px;top:992px;transform:scaleX(0.933)">Resources</span>
<span class="t" style="left:191px;top:992px;transform:scaleX(1.015)">Compile Log</span>
<span class="t" style="left:293px;top:992px;transform:scaleX(0.971)">Debug</span>
<span class="t" style="left:362px;top:992px;transform:scaleX(0.941)">Find Results</span>


<div id="bwhite"></div>
<!-- ================= STATUS BAR ================= -->
<div id="status">
 <span class="t" style="left:-7px;transform:scaleX(0.951)">Line:</span>
 <span class="t" style="left:31px;transform:scaleX(0.846)">15</span>
 <span class="t" style="left:87px;transform:scaleX(0.943)">Col:</span>
 <span class="t" style="left:120px;transform:scaleX(0.923)">46</span>
 <span class="t" style="left:177px;transform:scaleX(0.860)">Sel:</span>
 <span class="t" style="left:210px;transform:scaleX(0.857)">0</span>
 <span class="t" style="left:261px;transform:scaleX(0.938)">Lines:</span>
 <span class="t" style="left:303px;transform:scaleX(0.923)">59</span>
 <span class="t" style="left:360px;transform:scaleX(1.001)">Length:</span>
 <span class="t" style="left:406px;transform:scaleX(0.926)">1637</span>
 <div class="ssep" style="left:470px"></div>
 <span class="t" style="left:475px;transform:scaleX(0.967)">Insert</span>
 <div class="ssep" style="left:548px"></div>
 <span class="t" style="left:555px;transform:scaleX(0.962)">Done parsing in 0.25 seconds</span>
</div>
<div id="taskbar">
 <div class="a" style="left:263px;top:3px;width:7px;height:3px;border-radius:3px 3px 0 0;background:#f0c830"></div>
 <div class="tk" style="left:291px"></div><div class="tk" style="left:415px"></div><div class="tk" style="left:477px"></div>
 <div class="tk" style="left:539px;background:#dcbf8e;border-color:#ead6b0"><div class="a" style="left:13px;top:1px;width:30px;height:3px;background:#1a1208"></div></div>
</div>
</body>
</html>
